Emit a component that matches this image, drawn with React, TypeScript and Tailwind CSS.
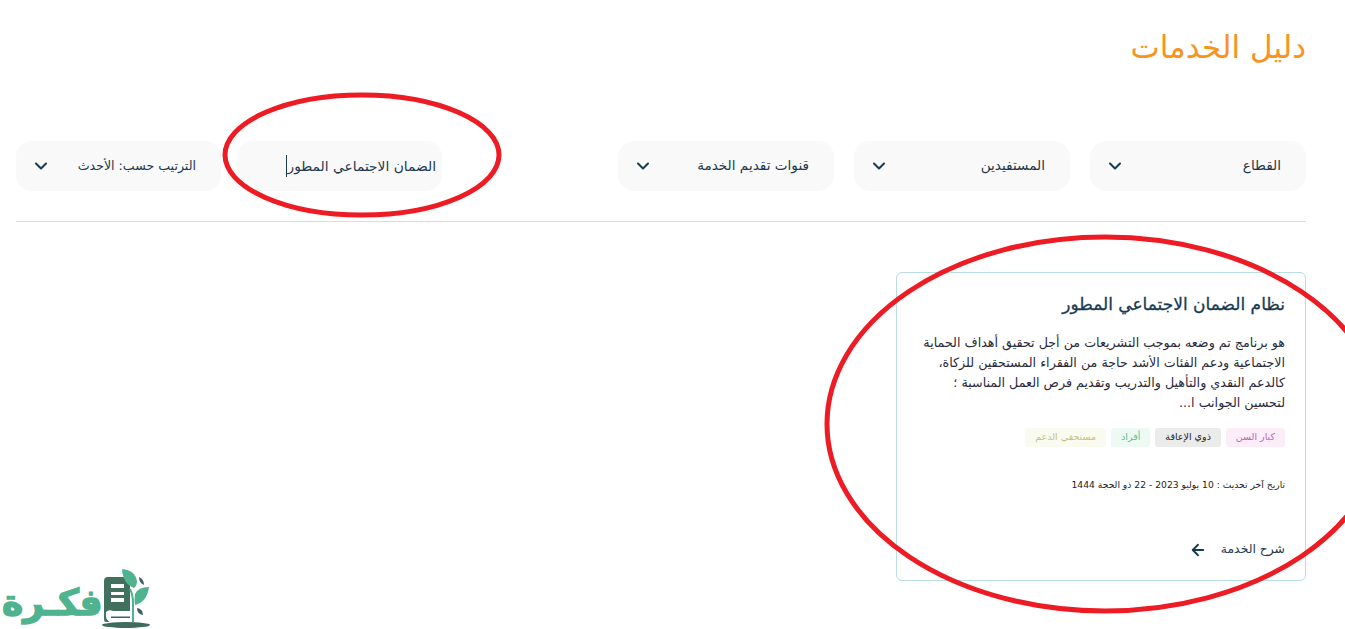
import { ArrowLeft, ChevronDown } from "lucide-react";

const font = "[font-family:'DejaVu_Sans','Noto_Sans',sans-serif]";

function Filter({
  label,
  wide,
  textClass = "-translate-y-px text-[13.6px]",
}: {
  label: string;
  wide?: boolean;
  textClass?: string;
}) {
  return (
    <div
      className={`flex h-[50px] items-center justify-between rounded-2xl bg-[#f9f9f9] pr-[25px] pl-[15px] text-[#1f3a4d] ${
        wide ? "w-[216px]" : "w-[205px]"
      }`}
    >
      <span className={textClass}>{label}</span>
      <ChevronDown size={20} strokeWidth={2.4} className="text-[#163a50]" />
    </div>
  );
}

function Tag({ label, className }: { label: string; className: string }) {
  return (
    <span className={`flex h-[19px] items-center rounded-[3px] px-[10px] text-[9.5px] ${className}`}>
      {label}
    </span>
  );
}

function Logo() {
  return (
    <div dir="ltr" className="absolute bottom-0 left-0 flex h-[62px] w-[152px] items-end">
      <span className="mb-[6px] ml-[2px] text-[36px] leading-[40px] font-bold text-[#4fb38f] [-webkit-text-stroke:1.5px_#4fb38f]">
        فكـرة
      </span>
      <svg viewBox="0 0 50 62" className="absolute top-0 left-[100px] h-[62px] w-[50px]">
        <ellipse cx="26" cy="58" rx="24" ry="3" fill="#3f6b5c" />
        <path d="M4 14q0-4 4-4h17q4 0 5 4v41H6q-2 0-2-3z" fill="#42705f" />
        <path d="M11 17h13v4H11zM11 25h13v3H11zM11 31h13v4H11z" fill="#fff" />
        <path d="M6 45q3-3 7-1h19v11H10q-5-2-4-10z" fill="#fff" />
        <path d="M11 49.5h19V51H11z" fill="#3f5f6b" />
        <path d="M33 55V36q0-8-3-14" fill="none" stroke="#4fb38f" strokeWidth="2" />
        <path d="M22 2q13 1 15 12 0 5-3 7-11-4-12-19z" fill="#4fb38f" />
        <path d="M49 20q-11 0-14 7-1 6 0 11 12-3 14-18z" fill="#4fb38f" />
        <path d="M39 10q5 2 5 8-5-2-5-8zM37 41q6 1 6 7-6-1-6-7z" fill="#3f5f6b" />
      </svg>
    </div>
  );
}

export default function App() {
  return (
    <div dir="rtl" className={`relative h-[629px] w-full overflow-hidden bg-white pr-[39px] pl-[16px] ${font}`}>
      <h1 className="pt-[27px] text-[31px] leading-[40px] text-[#f7931e]">دليل الخدمات</h1>

      <div className="mt-[74px] flex items-center gap-5">
        <Filter label="القطاع" wide />
        <Filter label="المستفيدين" wide />
        <Filter label="قنوات تقديم الخدمة" wide />
        <div className="mr-auto flex gap-4">
          <div className="flex h-[50px] w-[205px] items-center rounded-2xl bg-[#f9f9f9] pr-[6px] text-[13.8px] text-[#1f3a4d]">
            <span className="border-l border-[#1f3a4d] leading-[22px]">الضمان الاجتماعي المطور</span>
          </div>
          <Filter label="الترتيب حسب: الأحدث" textClass="text-[12.6px]" />
        </div>
      </div>

      <div className="mt-[30px] border-t border-[#d5dfe3]" />

      <div className="mt-[50px] flex h-[309px] w-[410px] flex-col rounded-[6px] border border-[#b9dde0] px-[20px] pt-[19px] pb-[21px]">
        <h2 className="text-[17px] leading-[24px] font-medium text-[#163a50] [-webkit-text-stroke:0.3px_#163a50]">
          نظام الضمان الاجتماعي المطور
        </h2>
        <p className="mt-[17px] text-[12.7px] leading-[20px] text-[#2a2a3a]">
          هو برنامج تم وضعه بموجب التشريعات من أجل تحقيق أهداف الحماية
          <br />
          الاجتماعية ودعم الفئات الأشد حاجة من الفقراء المستحقين للزكاة،
          <br />
          كالدعم النقدي والتأهيل والتدريب وتقديم فرص العمل المناسبة ؛
          <br />
          لتحسين الجوانب ا...
        </p>
        <div className="mt-[15px] flex gap-[5px]">
          <Tag label="كبار السن" className="bg-[#fbeef9] text-[#c75bb8]" />
          <Tag label="ذوي الإعاقة" className="bg-[#ebebeb] text-[#222222]" />
          <Tag label="أفراد" className="bg-[#ecfaf3] text-[#5cc08f]" />
          <Tag label="مستحقي الدعم" className="bg-[#f9faf0] text-[#c9c27a]" />
        </div>
        <p className="mt-[30px] text-[9.2px] leading-[16px] text-[#222222]">
          تاريخ آخر تحديث : 10 يوليو 2023 - 22 ذو الحجة 1444
        </p>
        <div className="mt-auto flex items-center gap-[14px] text-[12.4px] text-[#1f3a4d]">
          <span>شرح الخدمة</span>
          <ArrowLeft size={18} strokeWidth={2.4} className="text-[#163a50]" />
        </div>
      </div>

      <Logo />

      {/* hand drawn annotation marks on top of the page */}
      <svg className="pointer-events-none absolute inset-0 h-[629px] w-[1345px]" viewBox="0 0 1345 629" fill="none">
        <ellipse cx="362" cy="155" rx="137" ry="60" stroke="#ed1c24" strokeWidth="5" />
        <ellipse cx="1105" cy="424" rx="278" ry="187" stroke="#ed1c24" strokeWidth="5" />
      </svg>
    </div>
  );
}
